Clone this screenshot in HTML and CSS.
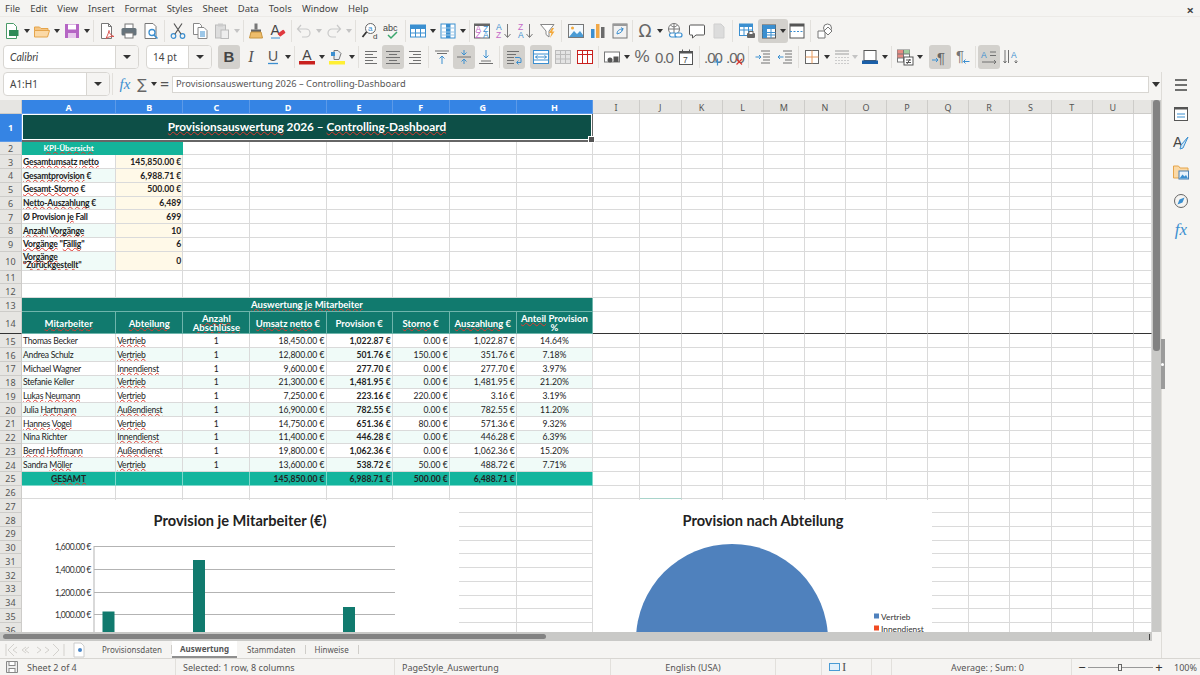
FILE: index.html
```html
<!DOCTYPE html>
<html lang="en">
<head>
    <meta charset="UTF-8">
    <title>Provisionsauswertung - LibreOffice Calc</title>
    <link rel="stylesheet" href="styles.css">
</head>
<body>
    <div class="menubar">
        <span>File</span><span>Edit</span><span>View</span><span>Insert</span><span>Format</span><span>Styles</span><span>Sheet</span><span>Data</span><span>Tools</span><span>Window</span><span>Help</span>
        <span class="close">×</span>
    </div>

    <!-- standard toolbar -->
    <div class="toolbar">
        <div class="btn"><svg class="ic" viewBox="0 0 18 18"><path d="M3.5 1.5h7l3 3v12h-10z" fill="#fff" stroke="#4a9a68"/><rect x="6" y="8" width="9.5" height="6" fill="#2f8a57"/></svg></div><i class="arrow"></i>
        <div class="btn"><svg class="ic" viewBox="0 0 18 18"><path d="M1.5 5h5L8 6.5h7v2H1.5z" fill="#f5c583" stroke="#e5a54b"/><path d="M1.5 15V8.5h15l-2 6.5z" fill="#fbd9a6" stroke="#e5a54b"/></svg></div><i class="arrow"></i>
        <div class="btn"><svg class="ic" viewBox="0 0 18 18"><rect x="2" y="2" width="14" height="14" fill="#b565c4"/><rect x="5" y="2.5" width="8" height="5" fill="#fff"/><rect x="5" y="11" width="8" height="5" fill="#e7c8ec"/></svg></div><i class="arrow"></i>
        <i class="sep"></i>
        <div class="btn"><svg class="ic" viewBox="0 0 18 18"><path d="M3.5 1.5h7l3 3v12h-10z" fill="#fff" stroke="#777"/><path d="M10.5 1.500v3h3" fill="none" stroke="#777"/><path d="M8 16.5c2-4 3-7 3-8 0 3 2 5 5 6-3-.5-6 .5-8 2z" fill="none" stroke="#d9534f"/></svg></div>
        <div class="btn"><svg class="ic" viewBox="0 0 18 18"><rect x="5" y="2" width="8" height="5" fill="#fff" stroke="#777"/><rect x="1.5" y="6" width="15" height="7.5" rx="1.5" fill="#66737b"/><rect x="5" y="11" width="8" height="5" fill="#fff" stroke="#777"/></svg></div>
        <div class="btn"><svg class="ic" viewBox="0 0 18 18"><path d="M3 1.5h8l3 3v12H3z" fill="#fff" stroke="#777"/><circle cx="10" cy="10.500" r="3" fill="#fff" stroke="#3b8fd0" stroke-width="1.300"/><path d="m12 13 3.500 3.500" stroke="#3b8fd0" stroke-width="1.500"/></svg></div>
        <i class="sep"></i>
        <div class="btn"><svg class="ic" viewBox="0 0 18 18"><circle cx="4.500" cy="14" r="2.300" fill="none" stroke="#3b8fd0" stroke-width="1.200"/><circle cx="13.500" cy="14" r="2.300" fill="none" stroke="#3b8fd0" stroke-width="1.200"/><path d="M6 12 13 1.500M12 12 5 1.500" fill="none" stroke="#555" stroke-width="1.200"/></svg></div>
        <div class="btn"><svg class="ic" viewBox="0 0 18 18"><path d="M2.500 1.500h6l2 2v9h-8z" fill="#fff" stroke="#888"/><path d="M7 5.500h6l3 3v8H7z" fill="#fff" stroke="#888"/><path d="M9 10h5M9 12h5M9 14h5" stroke="#3b8fd0"/></svg></div>
        <div class="btn"><svg class="ic" viewBox="0 0 18 18"><rect x="2.500" y="3" width="10" height="13" fill="#ddd" stroke="#bbb"/><rect x="5" y="1.500" width="5" height="3" fill="#ccc"/><rect x="8" y="8" width="7.500" height="8.500" fill="#eee" stroke="#bbb"/></svg></div><i class="arrow dim"></i>
        <i class="sep n"></i>
        <div class="btn"><svg class="ic" viewBox="0 0 18 18"><rect x="7.500" y="1.500" width="3" height="6" fill="#777"/><rect x="4" y="7.500" width="10" height="2.500" fill="#666"/><path d="M4 10h10l1.500 6h-13z" fill="#eebd6b" stroke="#c89540"/></svg></div>
        <div class="btn"><svg class="ic" viewBox="0 0 18 18"><text x="1.500" y="13" font-size="14" fill="#444">A</text><rect x="9" y="9.500" width="7" height="4" rx="1" transform="rotate(-35 12 11)" fill="#e0393e"/><path d="M2 16h9" stroke="#3b8fd0"/></svg></div>
        <i class="sep n"></i>
        <div class="btn"><svg class="ic" viewBox="0 0 18 18"><path d="M6 3 2.500 7 6 10.500M2.500 7H11a4 4 0 0 1 0 8H7" fill="none" stroke="#c9c9c9" stroke-width="1.200"/></svg></div><i class="arrow dim"></i>
        <div class="btn"><svg class="ic" viewBox="0 0 18 18"><path d="M12 3l3.500 4-3.500 3.500M15.500 7H7a4 4 0 0 0 0 8h4" fill="none" stroke="#c9c9c9" stroke-width="1.200"/></svg></div><i class="arrow dim"></i>
        <i class="sep w"></i>
        <div class="btn"><svg class="ic" viewBox="0 0 18 18"><circle cx="9.500" cy="6.500" r="5" fill="#fff" stroke="#666"/><path d="M5.500 10 1.500 15" stroke="#333" stroke-width="1.800"/><text x="7" y="9" font-size="8" fill="#3b8fd0">a</text><text x="12" y="17" font-size="8" fill="#444">d</text></svg></div>
        <div class="btn"><svg class="ic" viewBox="0 0 18 18"><text x="0" y="9" font-size="9" fill="#444">abc</text><path d="M5 13l3 3 6-6" fill="none" stroke="#3aa76d" stroke-width="1.500"/></svg></div>
        <i class="sep n"></i>
        <div class="btn"><svg class="ic" viewBox="0 0 18 18"><rect x="1.500" y="3" width="15" height="12" fill="#fff" stroke="#3b8fd0"/><rect x="1.500" y="3" width="15" height="4" fill="#3b8fd0"/><path d="M1.500 11h15M6.500 3v12M11.500 3v12" stroke="#3b8fd0"/></svg></div><i class="arrow"></i>
        <div class="btn"><svg class="ic" viewBox="0 0 18 18"><rect x="2" y="2" width="14" height="14" fill="#fff" stroke="#3b8fd0"/><rect x="7" y="2" width="4.500" height="14" fill="#3b8fd0"/><path d="M2 6h14M2 10h14M2 13h14" stroke="#9bc6e6"/></svg></div><i class="arrow"></i>
        <i class="sep n"></i>
        <div class="btn"><svg class="ic" viewBox="0 0 18 18"><rect x="1.500" y="2" width="15" height="14" fill="#fff" stroke="#666"/><rect x="1.500" y="2" width="15" height="2" fill="#666"/><text class="tiny" x="2.500" y="10" fill="#c46ac8">A</text><text class="tiny" x="2.500" y="16" fill="#c46ac8">Z</text><text class="tiny" x="10" y="10" fill="#3b8fd0">Z</text><text class="tiny" x="10" y="16" fill="#3b8fd0">A</text></svg></div>
        <div class="btn"><svg class="ic" viewBox="0 0 18 18"><text class="tiny" x="1" y="8" fill="#3b8fd0">A</text><text class="tiny" x="1" y="16" fill="#c46ac8">Z</text><path d="M12.500 2v13M9.500 12l3 3.500 3-3.500" fill="none" stroke="#777"/></svg></div>
        <div class="btn"><svg class="ic" viewBox="0 0 18 18"><text class="tiny" x="1" y="8" fill="#c46ac8">Z</text><text class="tiny" x="1" y="16" fill="#3b8fd0">A</text><path d="M12.500 2v13M9.500 12l3 3.500 3-3.500" fill="none" stroke="#777"/></svg></div>
        <div class="btn"><svg class="ic" viewBox="0 0 18 18"><path d="M1.500 2.500h13.500l-5 6.500v6l-3-2.500V9z" fill="#fff" stroke="#888"/><path d="M13 6l-3 5h2.500l-1.500 5 4.500-6.500H13l2-3.500z" fill="#f3a93c"/></svg></div>
        <i class="sep w"></i>
        <div class="btn"><svg class="ic" viewBox="0 0 18 18"><rect x="1.500" y="2.500" width="15" height="13" fill="#f4f9fd" stroke="#777"/><circle cx="5.500" cy="6" r="1.500" fill="#f3a93c"/><path d="M2 15l5-6 3 3 3-3 3 4v2z" fill="#4a9bd4"/></svg></div>
        <div class="btn"><svg class="ic" viewBox="0 0 18 18"><rect x="2" y="7" width="3.500" height="9" fill="#3b8fd0"/><rect x="7" y="2" width="3.500" height="14" fill="#f0a848"/><rect x="12" y="5" width="3.500" height="11" fill="#6b6b6b"/></svg></div>
        <div class="btn"><svg class="ic" viewBox="0 0 18 18"><rect x="2" y="2" width="14" height="14" fill="#f2f2f2" stroke="#777"/><rect x="2" y="2" width="14" height="2" fill="#999"/><path d="M6 12c0-3 2-5 6-5M12 7l-2-1.500M12 7l-2 1.500M12 6c0 3-2 5-6 6" fill="none" stroke="#3b8fd0"/></svg></div>
        <i class="sep n x"></i>
        <div class="btn"><svg class="ic" viewBox="0 0 18 18"><text class="omega" x="9" y="15" text-anchor="middle" fill="#666">Ω</text></svg></div><i class="arrow"></i>
        <div class="btn"><svg class="ic" viewBox="0 0 18 18"><circle cx="8" cy="7" r="5.500" fill="#fff" stroke="#777"/><path d="M2.500 7h11M8 1.500v11M4.500 3c2 2.500 5 2.500 7 0" fill="none" stroke="#777"/><rect x="3.500" y="11" width="7" height="4" rx="2" fill="#fff" stroke="#3b8fd0" stroke-width="1.200"/><rect x="9" y="11" width="7" height="4" rx="2" fill="#fff" stroke="#3b8fd0" stroke-width="1.200"/></svg></div>
        <div class="btn"><svg class="ic" viewBox="0 0 18 18"><path d="M2.500 3h13a1 1 0 0 1 1 1v8a1 1 0 0 1-1 1H8l-3.500 3v-3h-2a1 1 0 0 1-1-1V4a1 1 0 0 1 1-1z" fill="#fff" stroke="#555"/></svg></div>
        <div class="btn"><svg class="ic" viewBox="0 0 18 18"><path d="M4 2h7l3 3v11H4z" fill="#dcdcdc" stroke="#cfcfcf"/></svg></div>
        <i class="sep w"></i>
        <div class="btn"><svg class="ic" viewBox="0 0 18 18"><rect x="1.500" y="2" width="13" height="11.500" fill="#fff" stroke="#3b8fd0"/><rect x="1.500" y="2" width="13" height="3" fill="#3b8fd0"/><path d="M1.500 8h13M6 2v11M10.500 2v11" stroke="#3b8fd0"/><rect x="9" y="11" width="8" height="5" rx="1" fill="#666"/><rect x="11" y="9.500" width="4" height="3" fill="#fff" stroke="#666"/></svg></div>
        <div class="btn on caret"><svg class="ic" viewBox="0 0 18 18"><rect x="2.500" y="3" width="13" height="13" fill="#fff" stroke="#555"/><rect x="2.500" y="3" width="13" height="4" fill="#3b8fd0"/><rect x="2.500" y="3" width="4.500" height="13" fill="#3b8fd0"/><path d="M2.500 10.500h13M2.500 13h13M11 3v13" stroke="#3b8fd0"/></svg></div>
        <div class="btn"><svg class="ic" viewBox="0 0 18 18"><rect x="2" y="2" width="14" height="14" fill="#fff" stroke="#555"/><rect x="2" y="2" width="14" height="2.500" fill="#555"/><path d="M2 9.500h14" stroke="#3b8fd0" stroke-dasharray="2 1.500"/></svg></div>
        <i class="sep w"></i>
        <div class="btn"><svg class="ic" viewBox="0 0 18 18"><circle cx="11.500" cy="6" r="4" fill="#fff" stroke="#777"/><path d="M2 9h7v7H2z" fill="#fff" stroke="#777"/><path d="M12 5l4 4-4 4-4-4z" fill="#fff" stroke="#777"/></svg></div>
    </div>

    <!-- formatting toolbar -->
    <div class="toolbar fmt">
        <div class="combo font"><span class="val">Calibri</span><b></b></div>
        <div class="combo size"><span class="val">14 pt</span><b></b></div>
        <div class="btn on"><svg class="ic" viewBox="0 0 18 18"><text class="fmt-b" x="9" y="14" text-anchor="middle" fill="#444">B</text></svg></div>
        <div class="btn"><svg class="ic" viewBox="0 0 18 18"><text class="fmt-i" x="9" y="14" text-anchor="middle" fill="#555">I</text></svg></div>
        <div class="btn"><svg class="ic" viewBox="0 0 18 18"><text class="fmt-u" x="9" y="12.500" text-anchor="middle" fill="#555">U</text><path d="M4 15.500h10" stroke="#3b8fd0" stroke-width="1.300"/></svg></div><i class="arrow"></i>
        <i class="sep n"></i>
        <div class="btn"><svg class="ic" viewBox="0 0 18 18"><text class="fmt-u" x="9" y="12" text-anchor="middle" fill="#444">A</text><rect x="1" y="13" width="16" height="3.500" fill="#c9211e"/></svg></div><i class="arrow"></i>
        <div class="btn"><svg class="ic" viewBox="0 0 18 18"><path d="M6 2.500h4l3 3-2 6H6z" fill="#e9eef2" stroke="#777"/><rect x="3" y="4" width="4" height="4" fill="#3b8fd0"/><rect x="1" y="13" width="16" height="3.500" fill="#ffef33"/></svg></div><i class="arrow"></i>
        <i class="sep n"></i>
        <div class="btn"><svg class="ic" viewBox="0 0 18 18"><path class="ln" d="M3 3.500h12M3 6.500h8M3 9.500h12M3 12.500h8M3 15.500h12"/></svg></div>
        <div class="btn on"><svg class="ic" viewBox="0 0 18 18"><path class="ln" d="M2 3.500h14M5 6.500h8M2 9.500h14M5 12.500h8M2 15.500h14"/></svg></div>
        <div class="btn"><svg class="ic" viewBox="0 0 18 18"><path class="ln" d="M3 3.500h12M7 6.500h8M3 9.500h12M7 12.500h8M3 15.500h12"/></svg></div>
        <i class="sep"></i>
        <div class="btn"><svg class="ic" viewBox="0 0 18 18"><path class="ln" d="M2 3h14M4 5.500h10"/><path class="up" d="M9 16V8M6.500 10.500 9 8l2.500 2.500"/></svg></div>
        <div class="btn on"><svg class="ic" viewBox="0 0 18 18"><path class="ln" d="M2 9h14"/><path class="up" d="M9 2v5M6.500 4.500 9 7l2.500-2.500M9 16v-5M6.500 13.500 9 11l2.500 2.500"/></svg></div>
        <div class="btn"><svg class="ic" viewBox="0 0 18 18"><path class="ln" d="M2 15.500h14M4 13h10"/><path class="up" d="M9 2v8M6.500 7.500 9 10l2.500-2.500"/></svg></div>
        <i class="sep w"></i>
        <div class="btn on"><svg class="ic" viewBox="0 0 18 18"><path class="ln" d="M2 3.500h12M2 6.500h9M2 9.500h7M2 12.500h7M2 15.500h7"/><path class="up" d="M10 9.500h4a2 2 0 0 1 2 2v3h-4M13.500 12.500l-2 2 2 2"/></svg></div>
        <i class="gap"></i>
        <div class="btn on"><svg class="ic" viewBox="0 0 18 18"><rect x="1.500" y="2.500" width="15" height="13" fill="#fff" stroke="#3b8fd0"/><path d="M1.500 6h15M1.500 12h15" stroke="#3b8fd0"/><path d="M3.500 9h11M5.500 7.500 3.500 9l2 1.500M12.500 7.500l2 1.500-2 1.500" fill="none" stroke="#3b8fd0"/></svg></div>
        <div class="btn"><svg class="ic" viewBox="0 0 18 18"><rect x="1.500" y="2.500" width="15" height="13" fill="#e4e4e4" stroke="#bbb"/><path d="M1.500 6.500h15M1.500 11h15M6.500 2.500V15.500M11.500 2.500V15.500" stroke="#bbb"/></svg></div>
        <div class="btn"><svg class="ic" viewBox="0 0 18 18"><rect x="1.500" y="2.500" width="15" height="13" fill="#fff" stroke="#c9211e"/><path d="M1.500 6.500h15M6.500 2.500V15.500M11.500 2.500V15.500" stroke="#c9211e"/></svg></div>
        <i class="sep"></i>
        <div class="btn"><svg class="ic" viewBox="0 0 18 18"><rect x="1.500" y="4" width="15" height="10" fill="#fff" stroke="#777"/><circle cx="7" cy="12" r="2.500" fill="#555"/><rect x="10.500" y="8.500" width="5" height="5.500" fill="#555"/></svg></div><i class="arrow"></i>
        <div class="btn"><span class="glyph pct">%</span></div>
        <div class="btn"><span class="glyph">0.0</span></div>
        <div class="btn"><svg class="ic" viewBox="0 0 18 18"><rect x="2.500" y="3.500" width="13" height="13" fill="#fff" stroke="#555"/><rect x="2.500" y="3.500" width="13" height="2" fill="#555"/><path d="M5.500 1.500v3M12.500 1.500v3" stroke="#555"/><text class="tiny" x="6" y="15" fill="#444">7</text></svg></div>
        <i class="sep"></i>
        <div class="btn"><span class="glyph">.00</span><svg class="ic over" viewBox="0 0 18 18"><path d="M10 14h7M13.500 10.500v7" stroke="#3b8fd0" stroke-width="1.200"/></svg></div>
        <div class="btn"><span class="glyph">.00</span><svg class="ic over" viewBox="0 0 18 18"><path d="m10.500 11 5.500 5.500M16 11l-5.500 5.500" stroke="#d9372f" stroke-width="1.200"/></svg></div>
        <i class="sep w"></i>
        <div class="btn"><svg class="ic" viewBox="0 0 18 18"><path class="ln" d="M7 3h9M9 6h7M9 9h7M9 12h7M7 15h9"/><path class="up" d="M1.500 9H7M5 7l2 2-2 2"/></svg></div>
        <div class="btn"><svg class="ic" viewBox="0 0 18 18"><path class="ln" d="M7 3h9M9 6h7M9 9h7M9 12h7M7 15h9"/><path class="up" d="M2 9h5.500M4 7 2 9l2 2"/></svg></div>
        <i class="sep"></i>
        <div class="btn"><svg class="ic" viewBox="0 0 18 18"><rect x="2.500" y="2.500" width="13" height="13" fill="#fff" stroke="#666"/><path d="M9 2.500v13M2.500 9h13" stroke="#e89a5c"/></svg></div><i class="arrow"></i>
        <div class="btn thin"><svg class="ic" viewBox="0 0 18 18"><path d="M2 3h14M2 6h14" stroke="#bbb" stroke-width="1.500"/><path d="M2 9.500h14M2 12.500h14M2 15.500h14" stroke="#ccc" stroke-dasharray="2 1"/></svg></div><i class="arrow dim"></i>
        <div class="btn"><svg class="ic" viewBox="0 0 18 18"><rect x="3" y="2.500" width="12" height="10" fill="#fff" stroke="#555"/><rect x="1" y="12.500" width="16" height="3.500" fill="#1b5fa8"/></svg></div><i class="arrow"></i>
        <i class="sep"></i>
        <div class="btn"><svg class="ic" viewBox="0 0 18 18"><rect x="1.500" y="2" width="12" height="12" fill="#fff" stroke="#777"/><rect x="1.500" y="2" width="6" height="4" fill="#e58a82"/><rect x="7.500" y="2" width="6" height="4" fill="#9fce9f"/><rect x="1.500" y="6" width="6" height="4" fill="#e58a82"/><path d="M1.500 6h12M1.500 10h12M7.500 2v12" stroke="#777" fill="none"/><rect x="8" y="9" width="9" height="8" fill="#fff" stroke="#555"/><path d="M10 12h5M10 14.500h5M14 11l-3 5" stroke="#555" fill="none"/></svg></div><i class="arrow"></i>
        <i class="gap"></i>
        <div class="btn on"><svg class="ic" viewBox="0 0 18 18"><text class="pilcrow" x="10" y="15" text-anchor="middle" fill="#666">¶</text><path class="up" d="M1 12h6M5 10l2 2-2 2"/></svg></div>
        <div class="btn"><svg class="ic" viewBox="0 0 18 18"><text class="pilcrow" x="7" y="13" text-anchor="middle" fill="#777">¶</text><path class="up" d="M16.500 13.500h-6M12.500 11.500l-2 2 2 2"/></svg></div>
        <i class="sep"></i>
        <div class="btn on"><svg class="ic" viewBox="0 0 18 18"><text class="tiny" x="1" y="10" fill="#3b8fd0">A</text><path class="ln" d="M10 4h6M10 7.500h6M2 14h14M14 12l2 2-2 2"/></svg></div>
        <div class="btn"><svg class="ic" viewBox="0 0 18 18"><text class="tiny" x="9" y="10" fill="#3b8fd0">A</text><path class="ln" d="M3 2v13M6.500 2v13M1.500 13 3 15l1.500-2M14 12v3M12.500 13.500 14 15l1.500-1.500"/></svg></div>
    </div>

    <div class="workspace">
        <div class="main">
            <div class="formula-bar">
                <div class="combo name"><span class="val">A1:H1</span><b></b></div>
                <i class="sep n"></i>
                <span class="fx">fx</span>
                <span class="sigma">∑</span><i class="arrow"></i>
                <span class="equals">=</span>
                <div class="input">Provisionsauswertung 2026 – Controlling-Dashboard</div>
                <i class="arrow big"></i>
            </div>

            <div class="grid-row">
                <div class="sheet-wrap">
                    <table class="sheet" id="sheet"></table>

                    <svg class="chart bar-chart" viewBox="0 0 437 160">
                        <text class="chart-title" x="218" y="26" text-anchor="middle">Provision je Mitarbeiter (€)</text>
                        <path class="gridline" d="M72 46.500h301M72 69.500h301M72 92.500h301M72 114.500h301M72 46v114"/>
                        <g class="axis-label" text-anchor="end">
                            <text x="69" y="50">1,600.00 €</text>
                            <text x="69" y="73">1,400.00 €</text>
                            <text x="69" y="96">1,200.00 €</text>
                            <text x="69" y="118">1,000.00 €</text>
                        </g>
                        <rect class="bar" x="80.500" y="111.500" width="12" height="50"/>
                        <rect class="bar" x="171" y="60" width="12" height="100"/>
                        <rect class="bar" x="321" y="107" width="12" height="53"/>
                    </svg>

                    <svg class="chart pie-chart" viewBox="0 0 339 140">
                        <text class="chart-title" x="170" y="26" text-anchor="middle">Provision nach Abteilung</text>
                        <circle cx="139" cy="140" r="96" fill="#4f81bd"/>
                        <rect x="281" y="113.500" width="5" height="5" fill="#4f81bd"/>
                        <text class="legend" x="288" y="120">Vertrieb</text>
                        <rect x="281" y="125.500" width="5" height="5" fill="#f04b23"/>
                        <text class="legend" x="288" y="132">Innendienst</text>
                    </svg>
                </div>
                <div class="vscroll"><div class="vthumb"></div></div>
            </div>

            <div class="hscroll"><div class="hthumb"></div><i class="htick"></i></div>

            <div class="tabbar">
                <div class="tab-nav">
                    <svg width="62" height="14" viewBox="0 0 62 14"><path d="M2 1v12M10 1 4 7l6 6M13 4 9 7l4 3M22 4l-4 3 4 3M25 4l-4 3 4 3M33 4l4 3-4 3M41 4l4 3-4 3M49 1l6 6-6 6M60 1v12" fill="none" stroke="#d3d1cd"/></svg>
                </div>
                <div class="tab-new"><svg width="12" height="16" viewBox="0 0 12 16"><path d="M1 1h7l3 3v11H1z" fill="#fff" stroke="#ccc"/><circle cx="7" cy="8" r="2" fill="#4a86c8"/></svg></div>
                <div class="tab first">Provisionsdaten</div>
                <i class="tab-sep"></i>
                <div class="tab active">Auswertung</div>
                <div class="tab third">Stammdaten</div>
                <i class="tab-sep"></i>
                <div class="tab">Hinweise</div>
                <i class="tab-sep"></i>
            </div>
        </div>

        <!-- sidebar deck handle lies over the edge of the scrollbar -->
        <div class="deck-handle"></div>

        <div class="sidebar">
            <svg class="side-ic" viewBox="0 0 18 18"><path d="M3 4h12M3 9h12M3 14h12" stroke="#444" stroke-width="1.500"/></svg>
            <svg class="side-ic" viewBox="0 0 18 18"><rect x="2.500" y="2.500" width="13" height="13" fill="#fff" stroke="#555"/><rect x="2.500" y="2.500" width="13" height="2" fill="#555"/><path d="M5 9h8M5 12h8" stroke="#3b8fd0"/></svg>
            <svg class="side-ic" viewBox="0 0 18 18"><text x="1" y="13" font-size="14" fill="#444">A</text><path d="M16 3 9 11l-1 4 3-1z" fill="#cfe4f5" stroke="#3b8fd0"/></svg>
            <svg class="side-ic" viewBox="0 0 18 18"><path d="M1.500 15V3h5L8 5h8v10z" fill="#fbd9a6" stroke="#e5a54b"/><rect x="7" y="8" width="9.500" height="8" fill="#e8f2fa" stroke="#4a7fb0"/><path d="M7.500 15.500l3-4 2 2 1.500-1.500 2 3.500z" fill="#3b8fd0"/></svg>
            <svg class="side-ic" viewBox="0 0 18 18"><circle cx="9" cy="9" r="6.500" fill="none" stroke="#666"/><path d="M12.500 5.500 10.500 10.500 5.500 12.500 7.500 7.500z" fill="#3b8fd0"/></svg>
            <span class="side-fx">fx</span>
        </div>
    </div>

    <div class="statusbar">
        <div class="st s1"><svg width="14" height="14" viewBox="0 0 14 14"><path d="M1.500 1.500h11v11h-11z" fill="#eee" stroke="#888"/><rect x="4" y="1.500" width="6" height="4" fill="#fff" stroke="#888"/><rect x="4" y="8.500" width="6" height="4" fill="#fff" stroke="#888"/></svg><span>Sheet 2 of 4</span></div>
        <div class="st s2">Selected: 1 row, 8 columns</div>
        <div class="st s3">PageStyle_Auswertung</div>
        <div class="st s4">English (USA)</div>
        <div class="st s5"></div>
        <div class="st s6"><i class="mode-box"></i><span class="ibeam">I</span></div>
        <div class="st s7"></div>
        <div class="st s8">Average: ; Sum: 0</div>
        <div class="st s9"><span class="zm">−</span><i class="slider"><i></i></i><span class="zm">+</span></div>
        <div class="st s10">100%</div>
    </div>

    <script src="script.js"></script>
</body>
</html>
```

FILE: styles.css
```css
* {
    box-sizing: border-box;
}

body {
    margin: 0;
    width: 1200px;
    height: 675px;
    overflow: hidden;
    display: flex;
    flex-direction: column;
    background-color: #f5f4f2;
    color: #444;
    font-family: "Noto Sans", sans-serif;
    font-size: 10px;
}

i {
    display: block;
    font-style: normal;
}

/* menu */
.menubar {
    height: 17px;
    flex: none;
    display: flex;
    align-items: center;
    gap: 10px;
    padding-left: 5px;
    font-size: 9.500px;
    border-bottom: 1px solid #eceae7;
    position: relative;
}

.close {
    position: absolute;
    right: 6px;
    top: 1px;
    font-size: 13px;
    font-weight: bold;
}

/* toolbars */
.toolbar {
    height: 27px;
    flex: none;
    display: flex;
    align-items: center;
    padding-left: 1px;
}

.toolbar.fmt {
    height: 28px;
    padding: 0 0 2px 3px;
}

.btn {
    width: 22px;
    height: 24px;
    flex: none;
    display: flex;
    align-items: center;
    justify-content: center;
    border-radius: 3px;
    position: relative;
}

.btn.on {
    background-color: #d3d1cd;
}

.btn.caret {
    width: 30px;
    justify-content: flex-start;
    padding-left: 2px;
    margin-right: -2px;
}

.btn.caret::after {
    content: "";
    position: absolute;
    right: 2px;
    top: 10px;
    border: 3px solid transparent;
    border-top: 4px solid #333;
    border-bottom: 0;
}

.btn.thin {
    margin-right: -2px;
}

.ic {
    width: 18px;
    height: 18px;
    flex: none;
}

.ic text,
.side-ic text {
    font-family: "Liberation Sans", sans-serif;
}

.ic .tiny {
    font-size: 8.500px;
}

.ic .omega {
    font-family: "DejaVu Sans", sans-serif;
    font-size: 17px;
}

.ic .fmt-b {
    font-size: 15px;
    font-weight: bold;
}

.ic .fmt-i {
    font-family: "Liberation Serif", serif;
    font-size: 16px;
    font-style: italic;
}

.ic .fmt-u {
    font-size: 14px;
}

.ic .pilcrow {
    font-size: 15px;
}

.ic.over {
    position: absolute;
    left: 2px;
    top: 3px;
}

.ln {
    fill: none;
    stroke: #707070;
}

.up {
    fill: none;
    stroke: #3b8fd0;
}

.glyph {
    font-family: "Liberation Sans", sans-serif;
    font-size: 15px;
    color: #666;
    letter-spacing: -1px;
}

.glyph.pct {
    font-size: 17px;
    letter-spacing: 0;
}

.arrow {
    width: 8px;
    height: 4px;
    flex: none;
    position: relative;
}

.arrow::after {
    content: "";
    position: absolute;
    left: 1px;
    top: 0;
    border: 3px solid transparent;
    border-top: 4px solid #333;
    border-bottom: 0;
}

.arrow.dim::after {
    border-top-color: #c4c4c4;
}

.arrow.big {
    width: 12px;
}

.arrow.big::after {
    left: 3px;
    border-width: 4px;
    border-top-width: 5px;
    border-bottom: 0;
}

.sep {
    width: 1px;
    height: 22px;
    flex: none;
    margin: 0 2px;
    background-color: #e2e0dc;
}

.sep.n {
    margin-right: 1px;
}

.sep.n.x {
    margin-left: 1px;
}

.sep.w {
    margin-right: 3px;
}

.gap {
    width: 5px;
    flex: none;
}

/* dropdown boxes */
.combo {
    height: 24px;
    flex: none;
    display: flex;
    align-items: center;
    background-color: #fff;
    border: 1px solid #d8d6d2;
    border-radius: 4px;
    position: relative;
    overflow: hidden;
    font-size: 10px;
}

.combo .val {
    flex: 1;
    padding-left: 6px;
}

.combo b {
    width: 23px;
    height: 100%;
    flex: none;
    background-color: #f5f4f2;
    border-left: 1px solid #d8d6d2;
    position: relative;
}

.combo b::after {
    content: "";
    position: absolute;
    left: 7px;
    top: 9px;
    border: 4px solid transparent;
    border-top: 4px solid #333;
    border-bottom: 0;
}

.combo.font {
    width: 136px;
    margin-right: 7px;
    font-family: "Lato", sans-serif;
    font-style: italic;
    font-size: 10.500px;
}

.combo.size {
    width: 66px;
    margin-right: 6px;
}

.combo.name {
    width: 107px;
    margin-left: 3px;
}

/* main area */
.workspace {
    flex: 1;
    min-height: 0;
    display: flex;
    position: relative;
}

.main {
    width: 1161px;
    flex: none;
    display: flex;
    flex-direction: column;
}

.formula-bar {
    height: 28px;
    flex: none;
    display: flex;
    align-items: center;
    padding-bottom: 4px;
}

.fx {
    width: 18px;
    margin-left: 2px;
    text-align: center;
    font-family: "Liberation Serif", serif;
    font-style: italic;
    font-size: 15px;
    color: #3b8fd0;
}

.sigma {
    width: 16px;
    text-align: center;
    font-family: "DejaVu Sans", sans-serif;
    font-size: 14px;
    color: #666;
}

.equals {
    width: 13px;
    margin-left: 0;
    text-align: center;
    font-size: 16px;
    color: #555;
}

.input {
    flex: 1;
    height: 17px;
    margin-left: 1px;
    padding-left: 3px;
    background-color: #fff;
    border: 1px solid #d8d6d2;
    line-height: 14px;
    font-size: 9.300px;
    color: #555;
}

.grid-row {
    flex: 1;
    min-height: 0;
    display: flex;
}

.sheet-wrap {
    width: 1152px;
    flex: none;
    overflow: hidden;
    position: relative;
    background-color: #fff;
}

/* spreadsheet */
.sheet {
    border-collapse: separate;
    border-spacing: 0;
    table-layout: fixed;
    width: 1152px;
    font-family: "Lato", sans-serif;
    font-size: 8.600px;
    color: #222;
}

.sheet tr {
    height: 13.750px;
}

.sheet th {
    padding: 1px 0 0;
    font-family: "Noto Sans", sans-serif;
    font-weight: normal;
    font-size: 9px;
    line-height: 1;
    color: #555;
    background-color: #e6e5e2;
    border-right: 1px solid #cdccc9;
    border-bottom: 1px solid #cdccc9;
    overflow: hidden;
}

.sheet th.sel {
    background-color: #3584e4;
    color: #fff;
    font-weight: bold;
    border-color: #5c9ae8;
}

.sheet td {
    padding: 1px 1px 0;
    border-right: 1px solid #dadada;
    border-bottom: 1px solid #dadada;
    line-height: 1;
    white-space: nowrap;
    overflow: hidden;
}

.sheet u {
    text-decoration: underline wavy #e03a30;
    text-decoration-thickness: 1px;
    text-underline-offset: 0;
    text-decoration-skip-ink: none;
}

.sheet .head-row {
    height: 14px;
}

.sheet .title-row {
    height: 27.500px;
}

.sheet .tall-10 {
    height: 18.500px;
}

.sheet .tall-14 {
    height: 22.500px;
}

.sheet .frozen td,
.sheet .frozen th {
    border-bottom: 1px solid #333;
}

.sheet td.title {
    position: relative;
    text-align: center;
    font-size: 11.800px;
    font-weight: bold;
    color: #fff;
    background-color: #0d4f47;
    border: 0;
    box-shadow: inset 0 0 0 1px #fff;
    border-bottom: 2px solid #666;
    border-right: 1px solid #666;
    overflow: visible;
}

.sheet td.title::after {
    content: "";
    position: absolute;
    right: -3px;
    bottom: -3px;
    width: 5px;
    height: 5px;
    background-color: #555;
    border: 1px solid #fff;
}

.sheet td.band {
    text-align: center;
    font-size: 9.500px;
    font-weight: bold;
    color: #fff;
    background-color: #117a6e;
    border-color: #6fb5ac;
}

.sheet td.band-sub {
    text-align: center;
    font-size: 9.500px;
    line-height: 0.950;
    white-space: normal;
    font-weight: bold;
    color: #fff;
    background-color: #117a6e;
    border-color: #6fb5ac;
}

.sheet td.kpi-head {
    text-align: center;
    font-size: 8px;
    font-weight: bold;
    color: #fff;
    background-color: #14b49a;
    border-color: #14b49a;
}

.sheet td.label {
    font-weight: bold;
    white-space: normal;
    letter-spacing: -0.200px;
}

.sheet td.txt {
    letter-spacing: -0.250px;
}

.sheet td.value {
    text-align: right;
    font-weight: bold;
    background-color: #fff9e8;
}

.sheet .mint td.used {
    background-color: #f0fbf8;
}

.sheet td.r {
    text-align: right;
}

.sheet td.c {
    text-align: center;
}

.sheet td.strong {
    font-weight: bold;
}

.sheet .total td.used {
    font-weight: bold;
    background-color: #14b59e;
    border-color: #7fd8cb;
}

.sheet td.tick {
    border-bottom-color: #a9d4cb;
}

/* charts float over the cells */
.chart {
    position: absolute;
    background-color: #fff;
}

.bar-chart {
    left: 22px;
    top: 400px;
    width: 437px;
    height: 160px;
}

.pie-chart {
    left: 593px;
    top: 400px;
    width: 339px;
    height: 140px;
}

.chart-title {
    font-family: "Lato", sans-serif;
    font-size: 14.600px;
    font-weight: bold;
    fill: #222;
}

.gridline {
    fill: none;
    stroke: #b3b3b3;
}

.axis-label text {
    font-family: "Lato", sans-serif;
    font-size: 8.500px;
    letter-spacing: -0.450px;
    fill: #333;
}

.bar {
    fill: #117a6e;
}

.legend {
    font-family: "Lato", sans-serif;
    font-size: 8.300px;
    fill: #333;
}

/* scrollbars */
.vscroll {
    width: 9px;
    flex: none;
    padding: 0 1px;
    background-color: #c9c9c7;
}

.vthumb {
    height: 251px;
    background-color: #828282;
    border-radius: 3px;
}

.hscroll {
    height: 9px;
    flex: none;
    width: 1152px;
    padding: 2px 0 2px 3px;
    background-color: #c9c9c7;
    position: relative;
}

.hthumb {
    width: 543px;
    height: 100%;
    background-color: #828282;
    border-radius: 3px;
}

.htick {
    position: absolute;
    left: 1149px;
    top: 2px;
    width: 1px;
    height: 6px;
    background-color: #444;
}

.deck-handle {
    position: absolute;
    left: 1161px;
    top: 267px;
    width: 4px;
    height: 50px;
    background-color: #9b9b9b;
}

.deck-handle::after {
    content: "";
    position: absolute;
    left: 0;
    top: 24px;
    width: 3px;
    height: 3px;
    border-radius: 50%;
    background-color: #fff;
}

/* sidebar */
.sidebar {
    flex: 1;
    border-left: 1px solid #dedcd8;
    display: flex;
    flex-direction: column;
    align-items: center;
    padding-top: 4px;
    gap: 11px;
}

.side-ic {
    width: 18px;
    height: 18px;
    flex: none;
}

.side-fx {
    font-family: "Liberation Serif", serif;
    font-style: italic;
    font-size: 17px;
    line-height: 18px;
    color: #3b8fd0;
}

/* sheet tabs */
.tabbar {
    height: 17px;
    flex: none;
    display: flex;
    align-items: center;
    font-size: 8px;
    color: #555;
}

.tab-nav {
    width: 73px;
    padding-left: 4px;
    flex: none;
    display: flex;
}

.tab-new {
    width: 24px;
    flex: none;
    display: flex;
}

.tab {
    height: 17px;
    display: flex;
    align-items: center;
    padding: 0 9px;
}

.tab.first {
    padding: 0 9px 0 5px;
}

.tab.third {
    padding-left: 10px;
}

.tab.active {
    width: 65px;
    padding: 0 0 0 8px;
    font-weight: bold;
    background-color: #fff;
    border-bottom: 2px solid #8f8f8f;
}

.tab-sep {
    width: 1px;
    height: 9px;
    flex: none;
    background-color: #cfcdc9;
}

/* status bar */
.statusbar {
    height: 17px;
    flex: none;
    display: flex;
    align-items: center;
    border-top: 1px solid #d8d6d2;
    font-size: 9px;
    color: #555;
}

.st {
    height: 100%;
    flex: none;
    display: flex;
    align-items: center;
    padding-left: 7px;
    border-left: 1px solid #e2e0dc;
}

.st.s1 {
    width: 175px;
    padding-left: 5px;
    gap: 8px;
    border-left: 0;
}

.st.s2 {
    width: 219px;
}

.st.s3 {
    width: 216px;
}

.st.s4 {
    width: 165px;
    justify-content: center;
    padding: 0;
}

.st.s5 {
    width: 46px;
}

.st.s6 {
    width: 50px;
    padding-left: 7px;
    gap: 2px;
}

.st.s7 {
    width: 20px;
}

.st.s8 {
    width: 180px;
    padding: 0 0 0 59px;
}

.st.s9 {
    width: 101px;
    padding-left: 6px;
    gap: 2px;
}

.st.s10 {
    flex: 1;
    padding-left: 2px;
    border-left: 0;
}

.mode-box {
    width: 11px;
    height: 8px;
    background-color: #e3f0fa;
    border: 1px solid #4a9bd4;
}

.ibeam {
    font-family: "Liberation Serif", serif;
    font-size: 13px;
    color: #555;
}

.zm {
    width: 8px;
    text-align: center;
    font-size: 13px;
    line-height: 13px;
    color: #333;
}

.slider {
    width: 65px;
    height: 1px;
    background-color: #999;
    position: relative;
}

.slider i {
    position: absolute;
    left: 30px;
    top: -3px;
    width: 4px;
    height: 7px;
    background-color: #f5f4f2;
    border: 1px solid #666;
}
```

FILE: script.js
```js
// Column widths taken off the sheet, first entry is the row header
const COLS = [22, 94, 67, 67, 76, 66, 57, 67, 76, 47, 41.5, 41, 41, 41, 41, 41, 41, 41, 41, 41.5, 41, 41, 18];
const LETTERS = ['', 'A', 'B', 'C', 'D', 'E', 'F', 'G', 'H', 'I', 'J', 'K', 'L', 'M', 'N', 'O', 'P', 'Q', 'R', 'S', 'T', 'U', ''];
const TOTAL_ROWS = 36;
const USED_COLS = 8;

const KPI = {
    3: ['<u>Gesamtumsatz</u> <u>netto</u>', '145,850.00 €'],
    4: ['<u>Gesamtprovision</u> €', '6,988.71 €'],
    5: ['<u>Gesamt-Storno</u> €', '500.00 €'],
    6: ['<u>Netto-Auszahlung</u> €', '6,489'],
    7: ['Ø Provision <u>je</u> Fall', '699'],
    8: ['<u>Anzahl</u> <u>Vorgänge</u>', '10'],
    9: ['<u>Vorgänge</u> "<u>Fällig</u>"', '6'],
    10: ['<u>Vorgänge</u> "<u>Zurückgestellt</u>"', '0']
};

const PEOPLE = [
    ['Thomas Becker', '<u>Vertrieb</u>', '18,450.00 €', '1,022.87 €', '0.00 €', '1,022.87 €', '14.64%'],
    ['Andrea Schulz', '<u>Vertrieb</u>', '12,800.00 €', '501.76 €', '150.00 €', '351.76 €', '7.18%'],
    ['Michael Wagner', '<u>Innendienst</u>', '9,600.00 €', '277.70 €', '0.00 €', '277.70 €', '3.97%'],
    ['Stefanie Keller', '<u>Vertrieb</u>', '21,300.00 €', '1,481.95 €', '0.00 €', '1,481.95 €', '21.20%'],
    ['<u>Lukas</u> <u>Neumann</u>', '<u>Vertrieb</u>', '7,250.00 €', '223.16 €', '220.00 €', '3.16 €', '3.19%'],
    ['Julia <u>Hartmann</u>', '<u>Außendienst</u>', '16,900.00 €', '782.55 €', '0.00 €', '782.55 €', '11.20%'],
    ['<u>Hannes</u> <u>Vogel</u>', '<u>Vertrieb</u>', '14,750.00 €', '651.36 €', '80.00 €', '571.36 €', '9.32%'],
    ['Nina Richter', '<u>Innendienst</u>', '11,400.00 €', '446.28 €', '0.00 €', '446.28 €', '6.39%'],
    ['<u>Bernd</u> <u>Hoffmann</u>', '<u>Außendienst</u>', '19,800.00 €', '1,062.36 €', '0.00 €', '1,062.36 €', '15.20%'],
    ['Sandra <u>Möller</u>', '<u>Vertrieb</u>', '13,600.00 €', '538.72 €', '50.00 €', '488.72 €', '7.71%']
];

const HEADINGS = ['<u>Mitarbeiter</u>', '<u>Abteilung</u>', '<u>Anzahl</u> <u>Abschlüsse</u>', '<u>Umsatz</u> <u>netto</u> €', 'Provision €', '<u>Storno</u> €', '<u>Auszahlung</u> €', '<u>Anteil</u> Provision %'];

function blanks(from) {
    let html = '';
    for (let c = from; c < COLS.length - 1; c++) html += '<td></td>';
    return html;
}

function rowHeader(n, selected) {
    return `<th class="${selected ? 'sel' : ''}">${n}</th>`;
}

function buildRow(n) {
    if (n === 1) {
        return `<tr class="title-row">${rowHeader(1, true)}<td class="title" colspan="8"><u>Provisionsauswertung</u> 2026 – <u>Controlling-Dashboard</u></td>${blanks(USED_COLS)}</tr>`;
    }
    if (n === 2) {
        return `<tr>${rowHeader(2)}<td class="kpi-head"><u>KPI-Übersicht</u></td><td class="kpi-head"></td>${blanks(2)}</tr>`;
    }
    if (KPI[n]) {
        const cls = [n % 2 === 0 ? 'mint' : '', n === 10 ? 'tall-10' : ''].join(' ');
        return `<tr class="${cls}">${rowHeader(n)}<td class="label used">${KPI[n][0]}</td><td class="value">${KPI[n][1]}</td>${blanks(2)}</tr>`;
    }
    if (n === 13) {
        return `<tr>${rowHeader(13)}<td class="band" colspan="8"><u>Auswertung</u> <u>je</u> <u>Mitarbeiter</u></td>${blanks(USED_COLS)}</tr>`;
    }
    if (n === 14) {
        const heads = HEADINGS.map(h => `<td class="band-sub">${h}</td>`).join('');
        return `<tr class="tall-14 frozen">${rowHeader(14)}${heads}${blanks(USED_COLS)}</tr>`;
    }
    if (n >= 15 && n <= 24) {
        const p = PEOPLE[n - 15];
        return `<tr class="${n % 2 === 0 ? 'mint' : ''}">${rowHeader(n)}<td class="txt used">${p[0]}</td><td class="txt used">${p[1]}</td><td class="c used">1</td>` +
            `<td class="r used">${p[2]}</td><td class="r strong used">${p[3]}</td><td class="r used">${p[4]}</td><td class="r used">${p[5]}</td><td class="c used">${p[6]}</td>${blanks(USED_COLS)}</tr>`;
    }
    if (n === 25) {
        return `<tr class="total">${rowHeader(25)}<td class="c used"><u>GESAMT</u></td><td class="used"></td><td class="used"></td><td class="r used">145,850.00 €</td><td class="r used">6,988.71 €</td><td class="r used">500.00 €</td><td class="r used">6,488.71 €</td><td class="used"></td>${blanks(USED_COLS)}</tr>`;
    }
    if (n === 26) {
        let cells = '';
        for (let c = 0; c < COLS.length - 1; c++) cells += `<td class="${c === 9 ? 'tick' : ''}"></td>`;
        return `<tr>${rowHeader(26)}${cells}</tr>`;
    }
    return `<tr>${rowHeader(n)}${blanks(0)}</tr>`;
}

function buildSheet() {
    const table = document.getElementById('sheet');
    const cols = COLS.map(w => `<col style="width:${w}px">`).join('');
    const heads = LETTERS.map((l, i) => `<th class="${i >= 1 && i <= USED_COLS ? 'sel' : ''}">${l}</th>`).join('');
    let rows = '';
    for (let n = 1; n <= TOTAL_ROWS; n++) rows += buildRow(n);
    table.innerHTML = `<colgroup>${cols}</colgroup><tr class="head-row">${heads}</tr>${rows}`;
}

document.addEventListener('DOMContentLoaded', buildSheet);
```
